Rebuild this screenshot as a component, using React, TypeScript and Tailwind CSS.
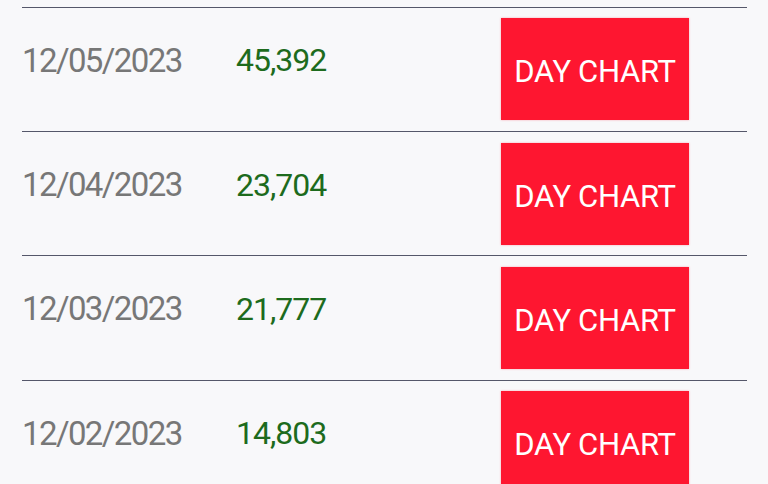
import React from 'react';

interface DayRow {
  date: string;
  count: string;
}

const rows: DayRow[] = [
  { date: '12/05/2023', count: '45,392' },
  { date: '12/04/2023', count: '23,704' },
  { date: '12/03/2023', count: '21,777' },
  { date: '12/02/2023', count: '14,803' },
];

const Row = ({ row }: { row: DayRow }) => (
  <div className="flex items-center h-[124.4px] border-t border-[#55576a]">
    {/* date */}
    <span className="w-[214px] pb-[18px] text-[33px] tracking-[-1.6px] leading-none text-[#777777]">
      {row.date}
    </span>
    {/* daily total */}
    <span className="w-[265px] pb-[18px] text-[32px] tracking-[-1px] leading-none text-[#1d6b1d]">
      {row.count}
    </span>
    <button className="w-[188px] h-[102px] bg-[#fe1630] text-white text-[31px] tracking-[-0.3px] leading-none pt-[5px] shadow-[0_0_2px_rgba(255,22,48,0.35)]">
      DAY CHART
    </button>
  </div>
);

export default function App() {
  return (
    <div
      className="w-[768px] h-[484px] overflow-hidden bg-[#f8f8fa] pt-[6.5px]"
      style={{ fontFamily: 'Roboto, "Noto Sans", sans-serif' }}
    >
      <div className="ml-[22px] w-[725px]">
        {rows.map((r) => (
          <Row key={r.date} row={r} />
        ))}
      </div>
    </div>
  );
}
